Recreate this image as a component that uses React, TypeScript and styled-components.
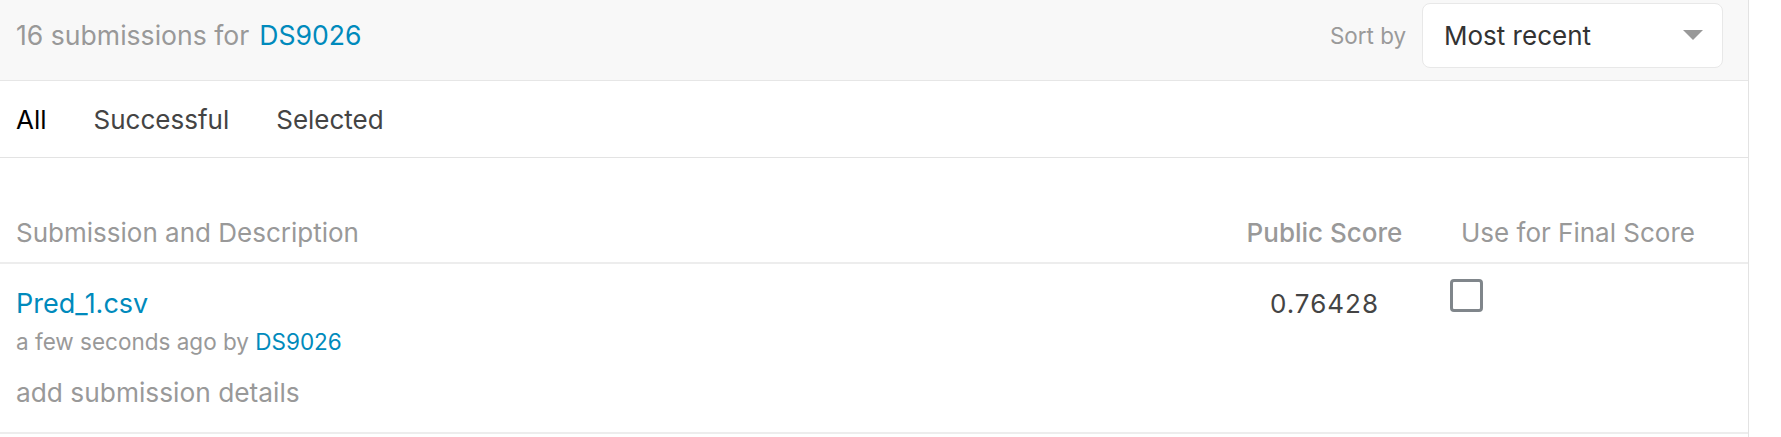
import React from "react";
import styled, { createGlobalStyle } from "styled-components";

const Global = createGlobalStyle`
  html, body { margin: 0; padding: 0; background: #ffffff; }
  body { font-family: Inter, "Noto Sans", sans-serif; -webkit-font-smoothing: antialiased; }
  * { box-sizing: border-box; }
`;

const Panel = styled.div`
  width: 1749px;
  min-height: 437px;
  border-right: 1px solid #e3e3e3;
  display: flex;
  flex-direction: column;
`;

const Header = styled.div`
  height: 81px;
  background: #f8f8f8;
  border-bottom: 1px solid #e6e6e6;
  display: flex;
  align-items: center;
  justify-content: space-between;
  padding: 3px 25px 13px 16px;
`;

const Title = styled.div`
  font-size: 26.6px;
  color: #999999;
  display: flex;
  gap: 10px;
`;

const Link = styled.span`
  color: #008abc;
`;

const SortGroup = styled.div`
  display: flex;
  align-items: center;
  gap: 16px;
`;

const SortLabel = styled.span`
  font-size: 22.4px;
  color: #9a9a9a;
`;

const Select = styled.div`
  width: 301px;
  height: 65px;
  background: #ffffff;
  border: 1px solid #e8e8e8;
  border-radius: 8px;
  display: flex;
  align-items: center;
  justify-content: space-between;
  padding: 0 19px 0 21px;
  font-size: 26px;
  color: #333333;
`;

const Tabs = styled.div`
  height: 77px;
  border-bottom: 1px solid #e3e3e3;
  display: flex;
  align-items: center;
  gap: 47px;
  padding: 0 16px 0 16px;
`;

const Tab = styled.span<{ $active?: boolean }>`
  font-size: 26px;
  color: ${(p) => (p.$active ? "#000000" : "#444444")};
`;

const Table = styled.div`
  margin-top: 45px;
  display: flex;
  flex-direction: column;
`;

const Row = styled.div<{ $head?: boolean }>`
  display: grid;
  grid-template-columns: 1fr 191px 328px;
  border-bottom: 2px solid #ededed;
  padding-left: 16px;
  padding-top: ${(p) => (p.$head ? "15px" : "25px")};
  height: ${(p) => (p.$head ? "61px" : "170px")};
`;

const HeadCell = styled.div<{ $center?: boolean; $strong?: boolean }>`
  font-size: 26px;
  line-height: 30px;
  color: #999999;
  font-weight: ${(p) => (p.$strong ? 500 : 400)};
  text-align: ${(p) => (p.$center ? "center" : "left")};
`;

const FinalHead = styled(HeadCell)`
  padding-left: 41px;
`;

const DescCell = styled.div`
  display: flex;
  flex-direction: column;
`;

const FileName = styled.span`
  font-size: 27px;
  color: #008abc;
  line-height: 30px;
`;

const Meta = styled.span`
  font-size: 22.5px;
  color: #999999;
  line-height: 30px;
  margin-top: 8px;
`;

const Details = styled.span`
  font-size: 26.3px;
  color: #999999;
  line-height: 30px;
  margin-top: 21px;
`;

const Score = styled.div`
  font-size: 26px;
  letter-spacing: 1px;
  color: #444444;
  text-align: center;
  line-height: 30px;
`;

const CheckCell = styled.div`
  padding-left: 30px;
  margin-top: -10px;
`;

const CheckBox = styled.span`
  display: block;
  width: 33px;
  height: 33px;
  border: 3px solid #80868b;
  border-radius: 4px;
`;

export default function App() {
  return (
    <>
      <Global />
      <Panel>
        <Header>
          <Title>
            <span>16 submissions for</span>
            <Link>DS9026</Link>
          </Title>
          <SortGroup>
            <SortLabel>Sort by</SortLabel>
            <Select>
              <span>Most recent</span>
              <svg width="20" height="10" viewBox="0 0 20 10">
                <polygon points="0,0 20,0 10,10" fill="#999999" />
              </svg>
            </Select>
          </SortGroup>
        </Header>
        <Tabs>
          <Tab $active>All</Tab>
          <Tab>Successful</Tab>
          <Tab>Selected</Tab>
        </Tabs>
        <Table>
          <Row $head>
            <HeadCell>Submission and Description</HeadCell>
            <HeadCell $center $strong>Public Score</HeadCell>
            <FinalHead>Use for Final Score</FinalHead>
          </Row>
          <Row>
            <DescCell>
              <FileName>Pred_1.csv</FileName>
              <Meta>
                a few seconds ago by <Link>DS9026</Link>
              </Meta>
              <Details>add submission details</Details>
            </DescCell>
            <Score>0.76428</Score>
            <CheckCell>
              <CheckBox />
            </CheckCell>
          </Row>
        </Table>
      </Panel>
    </>
  );
}
